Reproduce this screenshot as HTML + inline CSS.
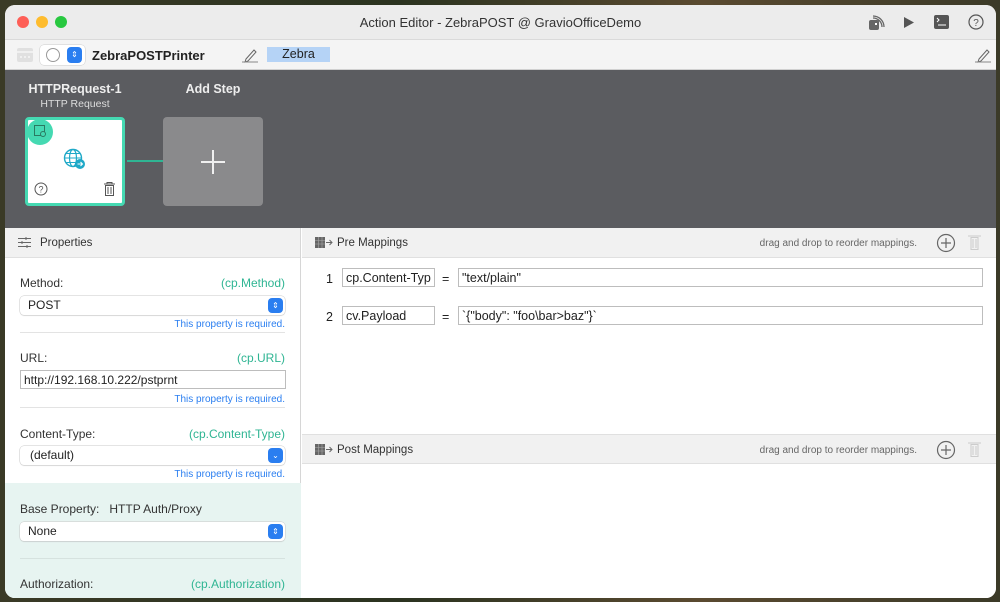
<!DOCTYPE html>
<html><head><meta charset="utf-8"><style>
*{box-sizing:border-box;margin:0;padding:0}
body{width:1000px;height:602px;overflow:hidden;background:linear-gradient(90deg,#3a3a26,#2b3320 40%,#5a4a30 70%,#3b3a28);font-family:"Liberation Sans",sans-serif;font-size:12px;color:#222;position:relative}
.win{position:absolute;left:5px;top:5px;width:991px;height:593px;border-radius:10px;overflow:hidden;background:#fff}
.abs{position:absolute}
.title{left:0;top:0;width:991px;height:35px;background:#ececec;border-bottom:1px solid #dadada}
.dot{width:12px;height:12px;border-radius:50%;top:11px}
.tb{left:0;top:35px;width:991px;height:30px;background:#f4f4f4;border-bottom:1px solid #d0d0d0}
.canvas{left:0;top:65px;width:991px;height:158px;background:#5b5c60}
.lp{left:0;top:223px;width:296px;height:370px;background:#fff;border-right:1px solid #d6d6d6}
.hdr{height:30px;background:#f1f1f1;border-bottom:1px solid #e0e0e0;color:#333;font-size:11.5px}
.lbl{font-size:12px;color:#333}
.grn{color:#2fb593;font-size:12px}
.req{color:#2a7ef0;font-size:10px}
.sel{height:19px;background:#fff;border-radius:4px;box-shadow:0 0 0 0.5px #c8c8c8,0 1px 1px rgba(0,0,0,.1);font-size:12px;padding:2px 0 0 8px}
.stp{position:absolute;right:2px;top:2px;width:15px;height:15px;border-radius:4px;background:#2a7ef0;color:#fff;font-size:8px;text-align:center;line-height:15px}
.sep{height:1px;background:#e3e3e3}
.inp{border:1px solid #bdbdbd;background:#fff;height:19px;font-size:12.5px;padding:2px 0 0 3px;white-space:nowrap;overflow:hidden}
</style></head><body>
<div class="win">
 <div class="abs title">
  <div class="abs dot" style="left:12px;background:#fe5f57"></div>
  <div class="abs dot" style="left:31px;background:#febc2e"></div>
  <div class="abs dot" style="left:50px;background:#28c840"></div>
  <div class="abs" style="left:0;width:991px;top:10px;text-align:center;font-size:13px;color:#333">Action Editor - ZebraPOST @ GravioOfficeDemo</div>
  <svg class="abs" style="left:862px;top:9px" width="18" height="18" viewBox="0 0 18 18"><path d="M6 4a9 9 0 0 1 9 9M6 2a11 11 0 0 1 11 11" stroke="#666" fill="none" stroke-width="1.3"/><rect x="2" y="6" width="10" height="10" rx="2" fill="#666"/><rect x="8" y="9" width="2" height="2" fill="#fff"/></svg>
  <svg class="abs" style="left:898px;top:11px" width="12" height="13"><path d="M1 1L11 6.5L1 12Z" fill="#555"/></svg>
  <svg class="abs" style="left:929px;top:10px" width="15" height="14"><rect width="15" height="14" rx="2" fill="#555"/><path d="M3 3l2 2-2 2M4 10h8" stroke="#fff" stroke-width="1" fill="none"/></svg>
  <svg class="abs" style="left:963px;top:9px" width="16" height="16"><circle cx="8" cy="8" r="7" stroke="#555" fill="none" stroke-width="1.2"/><text x="8" y="12" font-size="10" text-anchor="middle" fill="#555" font-family="Liberation Sans">?</text></svg>
 </div>
 <div class="abs tb">
  <svg class="abs" style="left:12px;top:8px" width="16" height="14"><rect width="16" height="14" rx="2" fill="#e0e0e0"/><path d="M0 4h16" stroke="#fff"/><path d="M3 9h2M7 9h2M11 9h2" stroke="#fff"/></svg>
  <div class="abs" style="left:35px;top:5px;width:45px;height:20px;background:#fff;border-radius:4px;box-shadow:0 0 0 .5px #ccc"></div>
  <div class="abs" style="left:41px;top:8px;width:14px;height:14px;border-radius:50%;border:1px solid #999"></div>
  <div class="abs" style="left:62px;top:7px;width:15px;height:16px;border-radius:4px;background:#2a7ef0;color:#fff;font-size:8px;text-align:center;line-height:16px">⇕</div>
  <div class="abs" style="left:87px;top:8px;font-weight:bold;font-size:13px">ZebraPOSTPrinter</div>
  <svg class="abs" style="left:237px;top:8px" width="16" height="15"><path d="M4 11l8-9 2 2-8 9-3 1z" stroke="#666" fill="none"/><path d="M0 14h16" stroke="#888"/></svg>
  <div class="abs" style="left:262px;top:7px;width:63px;height:15px;background:#b5d3f6;text-align:center;font-size:12.5px;line-height:15px">Zebra</div>
  <svg class="abs" style="left:970px;top:8px" width="16" height="15"><path d="M4 11l8-9 2 2-8 9-3 1z" stroke="#666" fill="none"/><path d="M0 14h16" stroke="#888"/></svg>
 </div>
 <div class="abs canvas">
  <div class="abs" style="left:20px;top:12px;width:100px;text-align:center;color:#eee;font-weight:bold;font-size:12.5px">HTTPRequest-1</div>
  <div class="abs" style="left:20px;top:28px;width:100px;text-align:center;color:#ddd;font-size:10.5px">HTTP Request</div>
  <div class="abs" style="left:158px;top:12px;width:100px;text-align:center;color:#eee;font-weight:bold;font-size:12.5px">Add Step</div>
  <div class="abs" style="left:20px;top:47px;width:100px;height:89px;background:#fff;border:3px solid #45d9b2;border-radius:4px"></div>
  <div class="abs" style="left:22px;top:49px;width:26px;height:26px;border-radius:50%;background:#45d9b2"></div>
  <svg class="abs" style="left:29px;top:55px" width="13" height="13"><rect x=".5" y=".5" width="10" height="10" stroke="#2a7a62" fill="none"/><circle cx="9" cy="9" r="2.5" stroke="#2a7a62" fill="#45d9b2"/></svg>
  <svg class="abs" style="left:58px;top:78px" width="25" height="24"><circle cx="10" cy="10" r="8.5" stroke="#1fa9c8" fill="none" stroke-width="1.4"/><ellipse cx="10" cy="10" rx="3.5" ry="8.5" stroke="#1fa9c8" fill="none" stroke-width="1.2"/><path d="M2 10h16M3.5 5.5h13M3.5 14.5h13" stroke="#1fa9c8" stroke-width="1.1"/><circle cx="17" cy="16" r="5" fill="#1fa9c8"/><path d="M14.5 16h5M17.5 14l2 2-2 2" stroke="#fff" fill="none"/></svg>
  <svg class="abs" style="left:29px;top:112px" width="14" height="14"><circle cx="7" cy="7" r="6" stroke="#555" fill="none"/><text x="7" y="10.5" font-size="9" text-anchor="middle" fill="#555" font-family="Liberation Sans">?</text></svg>
  <svg class="abs" style="left:98px;top:112px" width="13" height="14"><path d="M1 2h11M4 2V0.5h5V2M2.5 3.5h8v10h-8z" stroke="#555" fill="none"/><path d="M5 5v7M8 5v7" stroke="#555"/></svg>
  <div class="abs" style="left:122px;top:90px;width:36px;height:2px;background:#2fb593"></div>
  <div class="abs" style="left:158px;top:47px;width:100px;height:89px;background:#8a8a8c;border-radius:4px"></div>
  <div class="abs" style="left:196px;top:91px;width:24px;height:1.5px;background:#f0f0f0"></div>
  <div class="abs" style="left:207px;top:80px;width:1.5px;height:24px;background:#f0f0f0"></div>
 </div>
 <div class="abs lp">
  <div class="hdr" style="position:relative">
   <svg class="abs" style="left:13px;top:9px" width="13" height="11"><path d="M0 1.5h13M0 5.5h13M0 9.5h13" stroke="#666"/><path d="M8 0v3M4 4v3M9 8v3" stroke="#666"/></svg>
   <div class="abs" style="left:35px;top:9px">Properties</div>
  </div>
  <div class="abs lbl" style="left:15px;top:48px">Method:</div>
  <div class="abs grn" style="right:15px;top:48px">(cp.Method)</div>
  <div class="abs sel" style="left:15px;top:68px;width:265px">POST<div class="stp">⇕</div></div>
  <div class="abs req" style="right:15px;top:91px">This property is required.</div>
  <div class="abs sep" style="left:15px;top:104px;width:265px"></div>
  <div class="abs lbl" style="left:15px;top:123px">URL:</div>
  <div class="abs grn" style="right:15px;top:123px">(cp.URL)</div>
  <div class="abs inp" style="left:15px;top:142px;width:266px;font-size:12px">http://192.168.10.222/pstprnt</div>
  <div class="abs req" style="right:15px;top:166px">This property is required.</div>
  <div class="abs sep" style="left:15px;top:179px;width:265px"></div>
  <div class="abs lbl" style="left:15px;top:199px">Content-Type:</div>
  <div class="abs grn" style="right:15px;top:199px">(cp.Content-Type)</div>
  <div class="abs sel" style="left:15px;top:218px;width:265px;padding-left:10px">(default)<div class="stp">⌄</div></div>
  <div class="abs req" style="right:15px;top:241px">This property is required.</div>
  <div class="abs" style="left:0;top:255px;width:296px;height:115px;background:#e7f4f1"></div>
  <div class="abs lbl" style="left:15px;top:274px">Base Property:&nbsp;&nbsp;&nbsp;HTTP Auth/Proxy</div>
  <div class="abs sel" style="left:15px;top:294px;width:265px">None<div class="stp">⇕</div></div>
  <div class="abs" style="left:15px;top:330px;width:265px;height:1px;background:#d6e2df"></div>
  <div class="abs lbl" style="left:15px;top:349px">Authorization:</div>
  <div class="abs grn" style="right:15px;top:349px">(cp.Authorization)</div>
 </div>
 <div class="abs" style="left:297px;top:223px;width:694px;height:370px;background:#fff">
  <div class="hdr" style="position:relative">
   <svg class="abs" style="left:13px;top:9px" width="18" height="11"><rect width="10" height="11" fill="#666"/><path d="M0 3.5h10M0 7h10M3.5 0v11M7 0v11" stroke="#aaa" stroke-width=".6"/><path d="M11 5.5h6M14.5 3l2.5 2.5-2.5 2.5" stroke="#666" fill="none"/></svg>
   <div class="abs" style="left:35px;top:9px">Pre Mappings</div>
   <div class="abs" style="right:79px;top:10px;font-size:10px;color:#666">drag and drop to reorder mappings.</div>
   <svg class="abs" style="left:634px;top:5px" width="20" height="20"><circle cx="10" cy="10" r="8.5" stroke="#666" fill="none" stroke-width="1.2"/><path d="M10 5v10M5 10h10" stroke="#666" stroke-width="1.2"/></svg>
   <svg class="abs" style="left:666px;top:6px" width="13" height="16"><path d="M0 2h13M3 3.5h7v12h-7z" stroke="#ccc" fill="none"/><path d="M5 5v9M8 5v9" stroke="#ccc"/></svg>
  </div>
  <div class="abs" style="left:24px;top:44px;font-size:12.5px">1</div>
  <div class="abs inp" style="left:40px;top:40px;width:93px">cp.Content-Typ</div>
  <div class="abs" style="left:140px;top:44px;font-size:12.5px">=</div>
  <div class="abs inp" style="left:156px;top:40px;width:525px">"text/plain"</div>
  <div class="abs" style="left:24px;top:82px;font-size:12.5px">2</div>
  <div class="abs inp" style="left:40px;top:78px;width:93px">cv.Payload</div>
  <div class="abs" style="left:140px;top:82px;font-size:12.5px">=</div>
  <div class="abs inp" style="left:156px;top:78px;width:525px">`{"body": "foo\bar&gt;baz"}`</div>
  <div class="abs hdr" style="left:0;top:206px;width:694px;border-top:1px solid #e0e0e0">
   <svg class="abs" style="left:13px;top:9px" width="18" height="11"><rect width="10" height="11" fill="#666"/><path d="M0 3.5h10M0 7h10M3.5 0v11M7 0v11" stroke="#aaa" stroke-width=".6"/><path d="M11 5.5h6M14.5 3l2.5 2.5-2.5 2.5" stroke="#666" fill="none"/></svg>
   <div class="abs" style="left:35px;top:9px">Post Mappings</div>
   <div class="abs" style="right:79px;top:10px;font-size:10px;color:#666">drag and drop to reorder mappings.</div>
   <svg class="abs" style="left:634px;top:5px" width="20" height="20"><circle cx="10" cy="10" r="8.5" stroke="#666" fill="none" stroke-width="1.2"/><path d="M10 5v10M5 10h10" stroke="#666" stroke-width="1.2"/></svg>
   <svg class="abs" style="left:666px;top:6px" width="13" height="16"><path d="M0 2h13M3 3.5h7v12h-7z" stroke="#ccc" fill="none"/><path d="M5 5v9M8 5v9" stroke="#ccc"/></svg>
  </div>
 </div>
</div>
</body></html>
